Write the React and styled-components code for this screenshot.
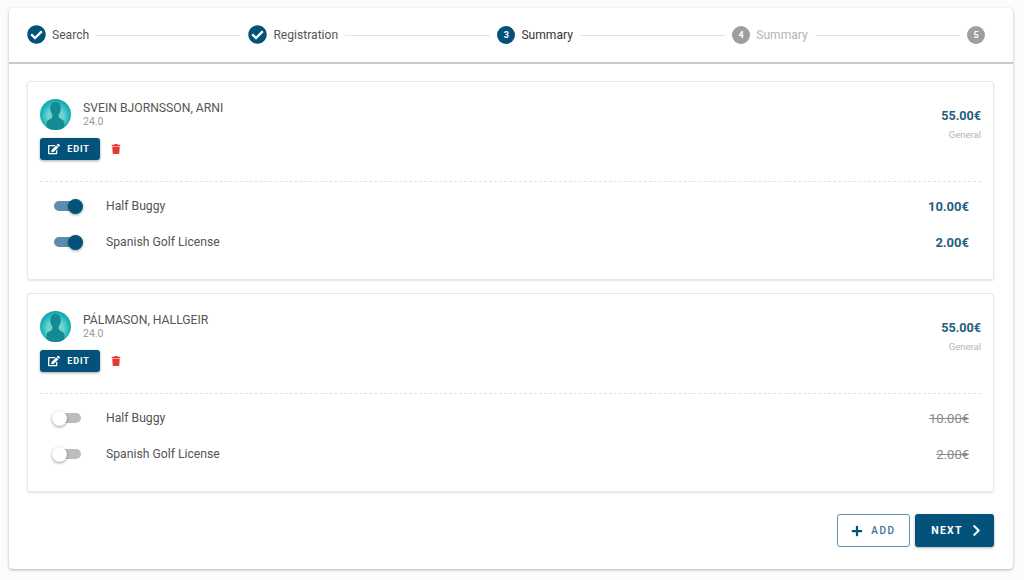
import React from 'react';
import styled, { createGlobalStyle } from 'styled-components';
import { FaCheckCircle, FaChevronRight, FaEdit, FaPlus, FaTrash } from 'react-icons/fa';

const primary = '#02527a';

const GlobalStyle = createGlobalStyle`
	html, body {
		margin: 0;
		background: #fcfcfc;
		font-family: Roboto, 'Liberation Sans', sans-serif;
	}
	* {
		box-sizing: border-box;
	}
`;

const Page = styled.div`
	width: 1024px;
	height: 580px;
	padding: 8px 11px 11px 9px;
	overflow: hidden;
`;

const Panel = styled.main`
	height: 561px;
	display: flex;
	flex-direction: column;
	background: #fff;
	border-radius: 4px;
	box-shadow: 0 1px 3px rgba(0, 0, 0, 0.3);
`;

const Stepper = styled.nav`
	height: 56px;
	flex: none;
	display: flex;
	align-items: center;
	padding: 0 28px 1px 18px;
	border-bottom: 2px solid #c9c9c9;
`;

const Step = styled.div`
	display: flex;
	align-items: center;
	gap: 6px;
	font-size: 12.1px;
	color: ${props => (props.$active ? '#333' : props.$pending ? '#b5b5b5' : '#555')};
	svg {
		color: ${primary};
		font-size: 19px;
	}
`;

const StepNumber = styled.span`
	width: 18px;
	height: 18px;
	border-radius: 50%;
	display: flex;
	align-items: center;
	justify-content: center;
	font-size: 9px;
	font-weight: 700;
	color: #fff;
	background: ${props => (props.$active ? primary : '#9e9e9e')};
`;

const Connector = styled.span`
	flex: 1;
	height: 1px;
	margin: 1px 7px 0;
	background: #e4e4e4;
`;

const Content = styled.div`
	flex: 1;
	display: flex;
	flex-direction: column;
	gap: 13px;
	padding: 17px 19px 0 18px;
`;

const Card = styled.section`
	border: 1px solid #e8e8e8;
	border-radius: 3px;
	padding: 17px 12px 19px;
	box-shadow: 0 1px 2px rgba(0, 0, 0, 0.12);
`;

const CardTop = styled.div`
	display: flex;
	justify-content: space-between;
	padding-bottom: 21px;
	border-bottom: 1px dashed #e2e2e2;
`;

const Person = styled.div`
	display: flex;
	gap: 12px;
`;

const Avatar = styled.svg`
	width: 31px;
	height: 31px;
	display: block;
`;

const PersonText = styled.div`
	padding-top: 2px;
`;

const Name = styled.div`
	font-size: 12.2px;
	line-height: 15px;
	color: #555;
`;

const Age = styled.div`
	font-size: 10.5px;
	line-height: 12px;
	color: #9a9a9a;
`;

const Actions = styled.div`
	display: flex;
	align-items: center;
	gap: 11px;
	margin-top: 8px;
`;

const EditButton = styled.button`
	width: 60px;
	height: 22px;
	padding: 0 2px 0 0;
	display: flex;
	align-items: center;
	justify-content: center;
	gap: 7px;
	border: none;
	border-radius: 3px;
	background: ${primary};
	color: #fff;
	font: 700 9px Roboto, sans-serif;
	letter-spacing: 0.9px;
	box-shadow: 0 1px 3px rgba(0, 0, 0, 0.35);
	svg {
		font-size: 12px;
	}
`;

const TrashButton = styled.span`
	display: flex;
	color: #e53935;
	font-size: 10px;
`;

const PriceBox = styled.div`
	text-align: right;
	padding-top: 9px;
`;

const Price = styled.div`
	font-size: 12.6px;
	line-height: 16px;
	font-weight: 700;
	color: #1f5f80;
`;

const PriceLabel = styled.div`
	margin-top: 5px;
	font-size: 9.5px;
	line-height: 12px;
	color: #b5b5b5;
`;

const Extras = styled.div`
	padding-top: 6px;
`;

const Extra = styled.div`
	height: 36px;
	display: flex;
	align-items: center;
	padding: 0 12px 0 14px;
`;

const Switch = styled.span`
	position: relative;
	width: 27px;
	height: 10px;
	flex: none;
	border-radius: 5px;
	background: ${props => (props.$on ? '#5b8fa9' : '#bdbdbd')};
	&::after {
		content: '';
		position: absolute;
		top: -2.5px;
		left: ${props => (props.$on ? '14px' : '-2px')};
		width: 15px;
		height: 15px;
		border-radius: 50%;
		background: ${props => (props.$on ? primary : '#fff')};
		box-shadow: 0 1px 3px rgba(0, 0, 0, 0.4);
	}
`;

const ExtraName = styled.span`
	flex: 1;
	margin-left: 25px;
	font-size: 12.2px;
	color: #555;
`;

const ExtraPrice = styled.span`
	font-size: 13px;
	font-weight: ${props => (props.$on ? 700 : 400)};
	color: ${props => (props.$on ? '#1f5f80' : '#8a8a8a')};
	text-decoration: ${props => (props.$on ? 'none' : 'line-through')};
`;

const Footer = styled.div`
	display: flex;
	justify-content: flex-end;
	gap: 5px;
	margin-top: 9px;
`;

const AddButton = styled.button`
	width: 73px;
	height: 33px;
	padding: 0;
	display: flex;
	align-items: center;
	justify-content: center;
	gap: 8px;
	background: #fff;
	border: 1px solid #5f93ad;
	border-radius: 3px;
	color: #3e7391;
	font: 500 10px Roboto, sans-serif;
	letter-spacing: 1.6px;
	svg {
		color: ${primary};
		font-size: 12px;
	}
`;

const NextButton = styled.button`
	width: 79px;
	height: 33px;
	padding: 0 0 0 5px;
	display: flex;
	align-items: center;
	justify-content: center;
	gap: 7px;
	background: ${primary};
	border: none;
	border-radius: 3px;
	color: #fff;
	font: 700 10.5px Roboto, sans-serif;
	letter-spacing: 1.2px;
	box-shadow: 0 1px 3px rgba(0, 0, 0, 0.3);
	svg {
		font-size: 13px;
	}
`;

const steps = [
	{ label: 'Search', done: true },
	{ label: 'Registration', done: true },
	{ label: 'Summary', number: 3, active: true },
	{ label: 'Summary', number: 4 },
	{ number: 5 }
];

const people = [
	{ id: 'a', name: 'SVEIN BJORNSSON, ARNI', on: true },
	{ id: 'b', name: 'PÁLMASON, HALLGEIR', on: false }
];

const extras = [
	{ name: 'Half Buggy', price: '10.00€' },
	{ name: 'Spanish Golf License', price: '2.00€' }
];

const Silhouette = ({ id }) => (
	<Avatar viewBox="0 0 31 31">
		<defs>
			<radialGradient id={id} cx="0.5" cy="0.55" r="0.55">
				<stop offset="0.45" stopColor="#6fd3d2" />
				<stop offset="0.8" stopColor="#1fb6b8" />
				<stop offset="1" stopColor="#0fa3a8" />
			</radialGradient>
			<clipPath id={`${id}-clip`}>
				<circle cx="15.5" cy="15.5" r="15.5" />
			</clipPath>
		</defs>
		<circle cx="15.5" cy="15.5" r="15.5" fill={`url(#${id})`} />
		<path
			clipPath={`url(#${id}-clip)`}
			d="M15.5 3c-3.300 0-5.300 2.800-5.300 6.400 0 2.500.9 4.500 2.100 5.900v2.600c-.4 1.500-2.700 2.300-4.300 3.400-1.100.8-1.500 2.500-1.500 4.700v5h18v-5c0-2.200-.4-3.900-1.500-4.700-1.600-1.100-3.900-1.900-4.300-3.400v-2.600c1.200-1.400 2.100-3.400 2.100-5.900 0-3.600-2-6.400-5.300-6.400z"
			fill="#148a92"
		/>
	</Avatar>
);

const App = () => (
	<Page>
		<GlobalStyle />
		<Panel>
			<Stepper>
				{steps.map((step, i) => (
					<React.Fragment key={i}>
						<Step $active={step.active} $pending={!step.done && !step.active}>
							{step.done ? (
								<FaCheckCircle />
							) : (
								<StepNumber $active={step.active}>{step.number}</StepNumber>
							)}
							{step.label && <span>{step.label}</span>}
						</Step>
						{i < steps.length - 1 && <Connector />}
					</React.Fragment>
				))}
			</Stepper>
			<Content>
				{people.map(person => (
					<Card key={person.id}>
						<CardTop>
							<div>
								<Person>
									<Silhouette id={person.id} />
									<PersonText>
										<Name>{person.name}</Name>
										<Age>24.0</Age>
									</PersonText>
								</Person>
								<Actions>
									<EditButton>
										<FaEdit />
										EDIT
									</EditButton>
									<TrashButton>
										<FaTrash />
									</TrashButton>
								</Actions>
							</div>
							<PriceBox>
								<Price>55.00€</Price>
								<PriceLabel>General</PriceLabel>
							</PriceBox>
						</CardTop>
						<Extras>
							{extras.map(extra => (
								<Extra key={extra.name}>
									<Switch $on={person.on} />
									<ExtraName>{extra.name}</ExtraName>
									<ExtraPrice $on={person.on}>{extra.price}</ExtraPrice>
								</Extra>
							))}
						</Extras>
					</Card>
				))}
				<Footer>
					<AddButton>
						<FaPlus />
						ADD
					</AddButton>
					<NextButton>
						NEXT
						<FaChevronRight />
					</NextButton>
				</Footer>
			</Content>
		</Panel>
	</Page>
);

export default App;
